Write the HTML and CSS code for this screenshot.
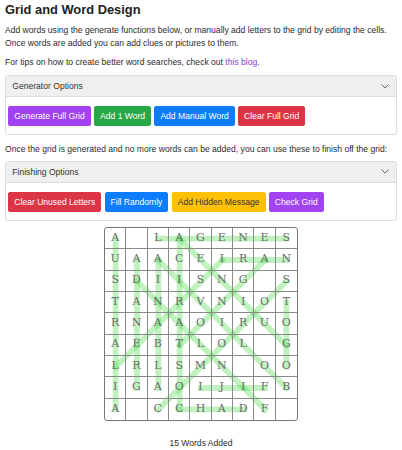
FILE: index.html
```html
<!DOCTYPE html>
<html lang="en">
<head>
<meta charset="utf-8">
<title>Grid and Word Design</title>
<link rel="stylesheet" href="styles.css">
</head>
<body>
<div class="page">
  <h2 class="title">Grid and Word Design</h2>
  <p class="intro">Add words using the generate functions below, or manually add letters to the grid by editing the cells.<br>Once words are added you can add clues or pictures to them.</p>
  <p class="tips">For tips on how to create better word searches, check out <a class="link" href="#">this blog</a>.</p>

  <div class="card">
    <div class="card-header">
      <span>Generator Options</span>
      <svg class="chevron" viewBox="0 0 8 5" width="8" height="5"><polyline points="0.5,0.5 4,4 7.5,0.5" fill="none" stroke="#666" stroke-width="1"/></svg>
    </div>
    <div class="card-body">
      <button class="btn btn-purple">Generate Full Grid</button>
      <button class="btn btn-green">Add 1 Word</button>
      <button class="btn btn-blue">Add Manual Word</button>
      <button class="btn btn-red">Clear Full Grid</button>
    </div>
  </div>

  <p class="note">Once the grid is generated and no more words can be added, you can use these to finish off the grid:</p>

  <div class="card">
    <div class="card-header">
      <span>Finishing Options</span>
      <svg class="chevron" viewBox="0 0 8 5" width="8" height="5"><polyline points="0.5,0.5 4,4 7.5,0.5" fill="none" stroke="#666" stroke-width="1"/></svg>
    </div>
    <div class="card-body">
      <button class="btn btn-red">Clear Unused Letters</button>
      <button class="btn btn-blue">Fill Randomly</button>
      <button class="btn btn-yellow">Add Hidden Message</button>
      <button class="btn btn-purple">Check Grid</button>
    </div>
  </div>

  <div class="grid-wrap">
    <div class="grid">
      <svg class="lines" viewBox="0 0 9 9" preserveAspectRatio="none">
        <line x1="0.5" y1="0.5" x2="0.5" y2="8.5"/>
        <line x1="2.5" y1="0.5" x2="8.5" y2="0.5"/>
        <line x1="5.5" y1="1.5" x2="8.5" y2="1.5"/>
        <line x1="4.5" y1="7.5" x2="7.5" y2="7.5"/>
        <line x1="3.5" y1="8.5" x2="6.5" y2="8.5"/>
        <line x1="3.5" y1="0.5" x2="3.5" y2="8.5"/>
        <line x1="8.5" y1="3.5" x2="8.5" y2="6.5"/>
        <line x1="1.5" y1="1.5" x2="1.5" y2="7.5"/>
        <line x1="2.5" y1="1.5" x2="2.5" y2="7.5"/>
        <line x1="3.5" y1="0.5" x2="8.5" y2="5.5"/>
        <line x1="1.5" y1="2.5" x2="7.5" y2="8.5"/>
        <line x1="2.5" y1="8.5" x2="8.5" y2="2.5"/>
        <line x1="5.5" y1="1.5" x2="0.5" y2="6.5"/>
        <line x1="2.5" y1="1.5" x2="8.5" y2="7.5"/>
        <line x1="3.5" y1="5.5" x2="7.5" y2="1.5"/>
      </svg>
      <div class="cell">A</div><div class="cell"></div><div class="cell">L</div><div class="cell">A</div><div class="cell">G</div><div class="cell">E</div><div class="cell">N</div><div class="cell">E</div><div class="cell">S</div>
      <div class="cell">U</div><div class="cell">A</div><div class="cell">A</div><div class="cell">C</div><div class="cell">E</div><div class="cell">I</div><div class="cell">R</div><div class="cell">A</div><div class="cell">N</div>
      <div class="cell">S</div><div class="cell">D</div><div class="cell">I</div><div class="cell">I</div><div class="cell">S</div><div class="cell">N</div><div class="cell">G</div><div class="cell"></div><div class="cell">S</div>
      <div class="cell">T</div><div class="cell">A</div><div class="cell">N</div><div class="cell">R</div><div class="cell">V</div><div class="cell">N</div><div class="cell">I</div><div class="cell">O</div><div class="cell">T</div>
      <div class="cell">R</div><div class="cell">N</div><div class="cell">A</div><div class="cell">A</div><div class="cell">O</div><div class="cell">I</div><div class="cell">R</div><div class="cell">U</div><div class="cell">O</div>
      <div class="cell">A</div><div class="cell">E</div><div class="cell">B</div><div class="cell">T</div><div class="cell">L</div><div class="cell">O</div><div class="cell">L</div><div class="cell"></div><div class="cell">G</div>
      <div class="cell">L</div><div class="cell">R</div><div class="cell">L</div><div class="cell">S</div><div class="cell">M</div><div class="cell">N</div><div class="cell"></div><div class="cell">O</div><div class="cell">O</div>
      <div class="cell">I</div><div class="cell">G</div><div class="cell">A</div><div class="cell">O</div><div class="cell">I</div><div class="cell">J</div><div class="cell">I</div><div class="cell">F</div><div class="cell">B</div>
      <div class="cell">A</div><div class="cell"></div><div class="cell">C</div><div class="cell">C</div><div class="cell">H</div><div class="cell">A</div><div class="cell">D</div><div class="cell">F</div><div class="cell"></div>
    </div>
  </div>

  <p class="count">15 Words Added</p>
</div>
</body>
</html>
```

FILE: styles.css
```css
* { box-sizing: border-box; }

html, body {
  margin: 0;
  padding: 0;
  background: #ffffff;
}

body {
  font-family: "Liberation Sans", Arial, sans-serif;
  font-size: 8.57px;
  line-height: 12.8px;
  color: #2b2b2b;
}

.page {
  padding: 0 5px;
}

.title {
  margin: 2px 0 6.5px;
  font-size: 12.86px;
  line-height: 15.4px;
  font-weight: bold;
  color: #222;
}

.intro {
  margin: 0 0 6.1px;
}

.tips {
  margin: 0 0 7.1px;
}

.link {
  color: #8c3bd9;
  text-decoration: none;
}

.card {
  border: 1px solid #dcdcdc;
  border-radius: 3px;
  background: #fff;
}

.card-header {
  display: flex;
  align-items: center;
  justify-content: space-between;
  padding: 3.2px 7px 3.2px 6.3px;
  background: #efefef;
  border-bottom: 1px solid #dcdcdc;
  border-radius: 3px 3px 0 0;
  color: #333;
}

.chevron {
  display: block;
  margin-right: 0;
}

.card-body {
  display: flex;
  gap: 3.3px;
  padding: 9.3px 2.3px 8px;
}

.btn {
  font-family: "Liberation Sans", Arial, sans-serif;
  font-size: 8.57px;
  line-height: 12.86px;
  padding: 2.7px 5px;
  border: 1px solid transparent;
  border-radius: 2px;
  color: #fff;
  cursor: pointer;
}

.btn-purple { background: #a143f0; border-color: #a143f0; }
.btn-green { background: #28a745; border-color: #28a745; }
.btn-blue { background: #0d7cfd; border-color: #0d7cfd; }
.btn-red { background: #dc3545; border-color: #dc3545; }
.btn-yellow { background: #ffc107; border-color: #ffc107; color: #333; }

.note {
  margin: 8.2px 0 5.2px;
}

.grid-wrap {
  display: flex;
  justify-content: center;
  margin-top: 6px;
}

.grid {
  position: relative;
  width: 194px;
  height: 194px;
  display: grid;
  grid-template-columns: repeat(9, 1fr);
  grid-template-rows: repeat(9, 1fr);
  border: 1px solid #777;
  border-radius: 3px;
}

.lines {
  position: absolute;
  top: 0;
  left: 0;
  width: 100%;
  height: 100%;
  z-index: 0;
}

.lines line {
  stroke: rgba(60, 215, 60, 0.33);
  stroke-width: 0.27;
  stroke-linecap: square;
}

.cell {
  position: relative;
  z-index: 1;
  display: flex;
  align-items: center;
  justify-content: center;
  border-right: 1px solid #8a8a8a;
  border-bottom: 1px solid #8a8a8a;
  font-family: "DejaVu Serif", "Liberation Serif", serif;
  font-size: 11px;
  color: #6a6a6a;
}

.cell:nth-child(9n+1) { border-right: none; }
.cell:nth-child(n+74) { border-bottom: none; }

.count {
  margin: 15.6px 0 0;
  text-align: center;
}
```
